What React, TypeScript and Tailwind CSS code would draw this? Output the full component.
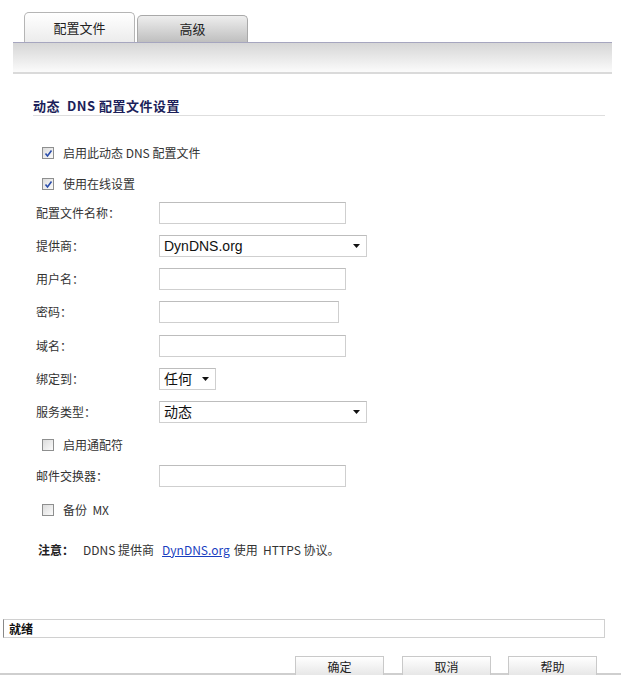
import React from "react";

const FONT = { fontFamily: '"Noto Sans CJK SC", "Liberation Sans", sans-serif' };

function Check({ on }: { on?: boolean }) {
  return (
    <span className="ml-[42px] flex h-[12px] w-[12px] items-center justify-center border border-[#8e8f8f] bg-gradient-to-br from-[#dcdcdc] to-[#fbfbfb]">
      {on && (
        <svg width="9" height="9" viewBox="0 0 9 9">
          <path d="M1.5 4.5 L3.5 7 L7.5 1.5" fill="none" stroke="#2a4dab" strokeWidth="1.6" />
        </svg>
      )}
    </span>
  );
}

function Arrow() {
  return (
    <svg width="7" height="4" viewBox="0 0 7 4" className="ml-auto mr-[6px]">
      <path d="M0 0 H7 L3.5 4 Z" fill="#111" />
    </svg>
  );
}

function Field({ label, w, mt }: { label: string; w: string; mt: string }) {
  return (
    <div className={`flex h-[22px] items-center ${mt}`}>
      <span className="w-[159px] shrink-0 pl-[36px] text-[12px] text-[#333]">{label}</span>
      <div className={`h-[22px] ${w} border border-[#cfcfcf] border-t-[#bdbdbd] bg-white`} />
    </div>
  );
}

function Select({ label, value, w, mt }: { label: string; value: string; w: string; mt: string }) {
  return (
    <div className={`flex h-[22px] items-center ${mt}`}>
      <span className="w-[159px] shrink-0 pl-[36px] text-[12px] text-[#333]">{label}</span>
      <div className={`flex h-[22px] ${w} items-center border border-[#cfcfcf] border-t-[#bdbdbd] bg-white pl-[4px] text-[14px] text-[#111]`}>
        <span style={{ fontFamily: '"Liberation Sans", "Noto Sans CJK SC", sans-serif' }}>{value}</span>
        <Arrow />
      </div>
    </div>
  );
}

function CheckRow({ label, on, mt }: { label: string; on?: boolean; mt: string }) {
  return (
    <div className={`flex h-[22px] items-center ${mt}`}>
      <Check on={on} />
      <span className="ml-[9px] text-[12px] text-[#333]">{label}</span>
    </div>
  );
}

export default function App() {
  return (
    <div className="relative h-[675px] w-[621px] overflow-hidden bg-white" style={FONT}>
      {/* Tabs */}
      <div className="mt-[12px] flex h-[30px] items-end pl-[24px]">
        <div className="flex h-[30px] w-[111px] items-center justify-center rounded-t-[5px] border border-b-0 border-[#b5b5b5] bg-gradient-to-b from-[#ffffff] to-[#ececec] text-[13px] text-[#222]">
          配置文件
        </div>
        <div className="ml-[2px] flex h-[27px] w-[111px] items-center justify-center rounded-t-[5px] border border-b-0 border-[#a9a9a9] bg-gradient-to-b from-[#eeeeee] to-[#bfbfbf] text-[13px] text-[#222]">
          高级
        </div>
      </div>
      <div className="ml-[13px] h-[30px] w-[599px] border-t border-[#a6a6bf] bg-gradient-to-b from-[#d6d6d6] to-[#fbfbfb]" />
      <div className="ml-[13px] h-[2px] w-[599px] bg-[#dadada]" />

      {/* Section title */}
      <div className="ml-[33px] mt-[24px] w-[572px] border-b border-[#dedede] pb-[1px]">
        <div className="h-[16px] text-[13px] font-bold leading-[16px] tracking-[0.5px] text-[#1c1f5a]">动态 &nbsp;DNS 配置文件设置</div>
      </div>

      <CheckRow label="启用此动态 DNS 配置文件" on mt="mt-[26px]" />
      <CheckRow label="使用在线设置" on mt="mt-[9px]" />
      <Field label="配置文件名称：" w="w-[187px]" mt="mt-[7px]" />
      <Select label="提供商：" value="DynDNS.org" w="w-[208px]" mt="mt-[11px]" />
      <Field label="用户名：" w="w-[187px]" mt="mt-[11px]" />
      <Field label="密码：" w="w-[180px]" mt="mt-[11px]" />
      <Field label="域名：" w="w-[187px]" mt="mt-[12px]" />
      <Select label="绑定到：" value="任何" w="w-[57px]" mt="mt-[11px]" />
      <Select label="服务类型：" value="动态" w="w-[208px]" mt="mt-[11px]" />
      <CheckRow label="启用通配符" mt="mt-[11px]" />
      <Field label="邮件交换器：" w="w-[187px]" mt="mt-[9px]" />
      <CheckRow label="备份 &nbsp;MX" mt="mt-[12px]" />

      <div className="ml-[38px] mt-[21px] flex h-[16px] items-center whitespace-pre text-[12px] text-[#333]">
        <span className="font-bold text-[#222]">注意：</span>
        <span className="ml-[9px]">DDNS 提供商</span>
        <a className="ml-[8px] text-[#1a3fbf] underline">DynDNS.org</a>
        <span className="ml-[4px]">使用  HTTPS 协议。</span>
      </div>

      {/* Status */}
      <div className="ml-[3px] mt-[61px] flex h-[19px] w-[602px] items-center border border-[#d0d0d0] border-l-[#888] pl-[5px] text-[12px] font-bold text-[#111]">
        就绪
      </div>

      {/* Buttons */}
      <div className="relative mt-[18px] h-[20px]">
        <div className="absolute bottom-[1px] left-0 h-[2px] w-full bg-[#cfcfcf]" />
        <div className="relative flex h-[20px] pl-[295px]">
          {["确定", "取消", "帮助"].map((t, i) => (
            <div
              key={t}
              className={`flex h-[20px] w-[89px] items-center justify-center border border-b-0 border-[#c9c9c9] bg-gradient-to-b from-[#ffffff] to-[#e6e6e6] text-[12px] text-[#222] ${i === 1 ? "ml-[18px]" : i === 2 ? "ml-[17px]" : ""}`}
            >
              {t}
            </div>
          ))}
        </div>
      </div>
    </div>
  );
}
